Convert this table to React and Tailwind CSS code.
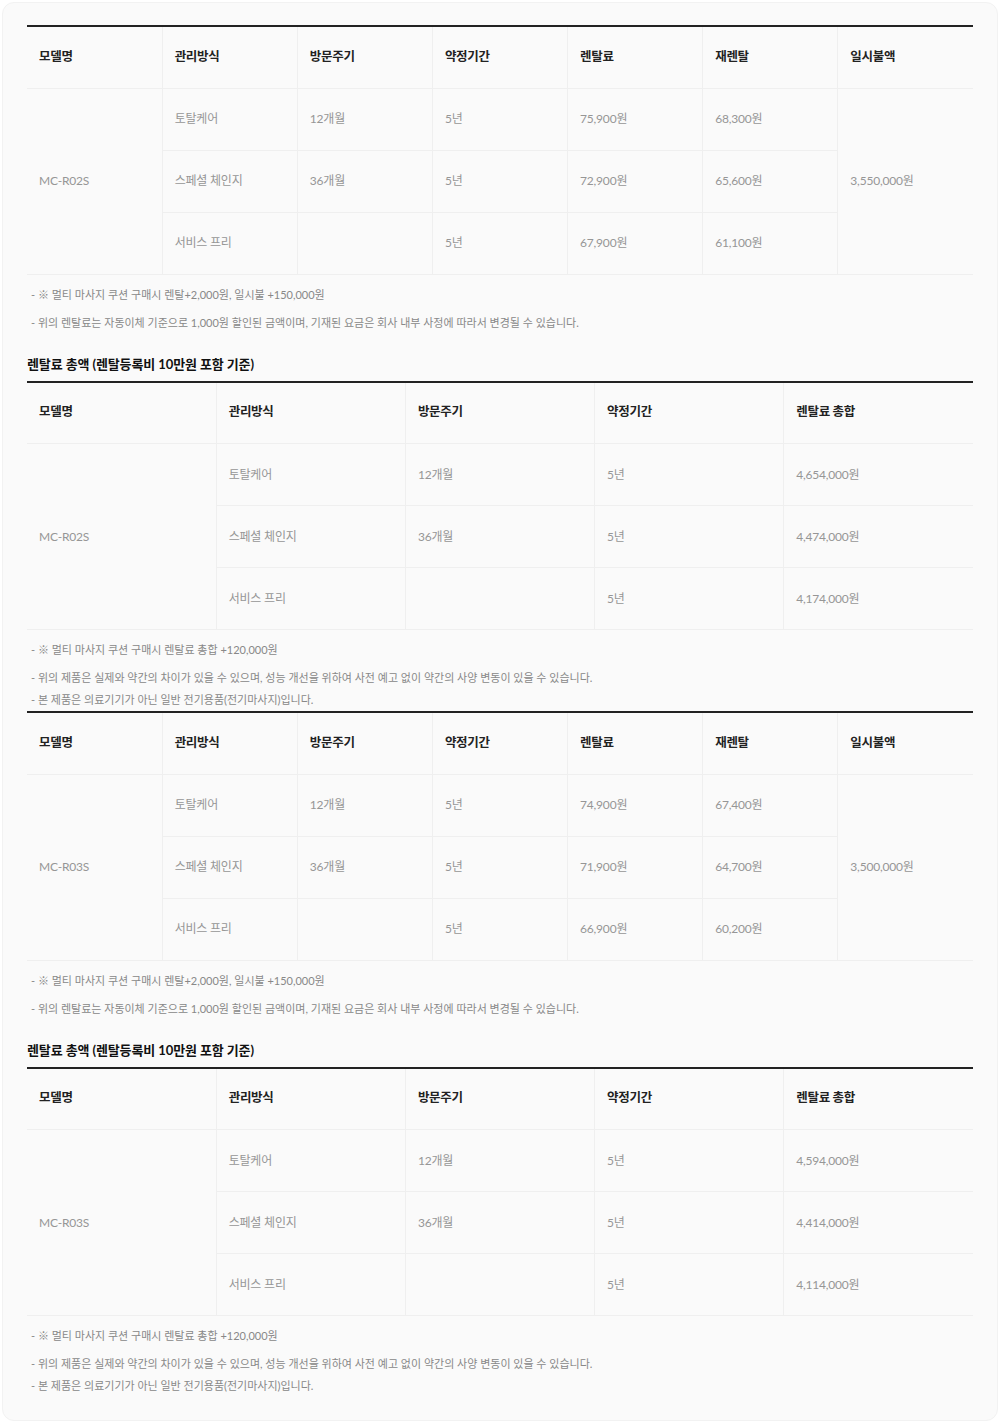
import React from "react";

const font = { fontFamily: 'Lato, "Noto Sans CJK KR", sans-serif' };

const rentalTables = [
  {
    model: "MC-R02S",
    lump: "3,550,000원",
    rows: [
      ["토탈케어", "12개월", "5년", "75,900원", "68,300원"],
      ["스페셜 체인지", "36개월", "5년", "72,900원", "65,600원"],
      ["서비스 프리", "", "5년", "67,900원", "61,100원"],
    ],
    totals: [
      ["토탈케어", "12개월", "5년", "4,654,000원"],
      ["스페셜 체인지", "36개월", "5년", "4,474,000원"],
      ["서비스 프리", "", "5년", "4,174,000원"],
    ],
  },
  {
    model: "MC-R03S",
    lump: "3,500,000원",
    rows: [
      ["토탈케어", "12개월", "5년", "74,900원", "67,400원"],
      ["스페셜 체인지", "36개월", "5년", "71,900원", "64,700원"],
      ["서비스 프리", "", "5년", "66,900원", "60,200원"],
    ],
    totals: [
      ["토탈케어", "12개월", "5년", "4,594,000원"],
      ["스페셜 체인지", "36개월", "5년", "4,414,000원"],
      ["서비스 프리", "", "5년", "4,114,000원"],
    ],
  },
];

const th =
  "h-[62px] px-3 text-left align-middle text-[12.5px] font-bold tracking-[-0.3px] text-[#222] border-b border-[#efefef]";
const td =
  "h-[62px] px-3 text-left align-middle text-[12px] tracking-[-0.2px] text-[#969696] border-b border-[#efefef]";
const vline = "border-l border-[#efefef]";

const Note = ({ children, className = "" }) => (
  <p
    className={
      "pl-[4px] text-[11px] leading-[20px] tracking-[0px] text-[#888] " + className
    }
  >
    - {children}
  </p>
);

const RentalTable = ({ data }) => (
  <table className="w-full table-fixed border-collapse border-t-2 border-[#222]">
    <thead>
      <tr>
        {["모델명", "관리방식", "방문주기", "약정기간", "렌탈료", "재렌탈", "일시불액"].map(
          (h, i) => (
            <th key={h} className={th + (i > 0 ? " " + vline : "")}>
              {h}
            </th>
          )
        )}
      </tr>
    </thead>
    <tbody>
      {data.rows.map((r, idx) => (
        <tr key={idx}>
          {idx === 0 && (
            <td rowSpan={3} className={td}>
              {data.model}
            </td>
          )}
          {r.map((c, i) => (
            <td key={i} className={td + " " + vline}>
              {c}
            </td>
          ))}
          {idx === 0 && (
            <td rowSpan={3} className={td + " " + vline}>
              {data.lump}
            </td>
          )}
        </tr>
      ))}
    </tbody>
  </table>
);

const TotalTable = ({ data }) => (
  <table className="w-full table-fixed border-collapse border-t-2 border-[#222]">
    <thead>
      <tr>
        {["모델명", "관리방식", "방문주기", "약정기간", "렌탈료 총합"].map((h, i) => (
          <th key={h} className={th + (i > 0 ? " " + vline : "")}>
            {h}
          </th>
        ))}
      </tr>
    </thead>
    <tbody>
      {data.totals.map((r, idx) => (
        <tr key={idx}>
          {idx === 0 && (
            <td rowSpan={3} className={td}>
              {data.model}
            </td>
          )}
          {r.map((c, i) => (
            <td key={i} className={td + " " + vline}>
              {c}
            </td>
          ))}
        </tr>
      ))}
    </tbody>
  </table>
);

export default function App() {
  return (
    <div className="bg-white p-[2px]" style={font}>
      <div className="rounded-xl border border-[#f2f2f2] bg-[#fafafa] px-6 pt-[22px] pb-6">
        {rentalTables.map((d, i) => (
          <section key={d.model}>
            <RentalTable data={d} />
            <Note className="mt-[10px]">
              ※ 멀티 마사지 쿠션 구매시 렌탈+2,000원, 일시불 +150,000원
            </Note>
            <Note className="mt-2">
              위의 렌탈료는 자동이체 기준으로 1,000원 할인된 금액이며, 기재된 요금은 회사 내부
              사정에 따라서 변경될 수 있습니다.
            </Note>
            <h3 className="mt-[20px] text-[13px] font-bold leading-[22px] tracking-[-0.1px] text-[#111]">
              렌탈료 총액 (렌탈등록비 10만원 포함 기준)
            </h3>
            <div className="mt-[6px]">
              <TotalTable data={d} />
            </div>
            <Note className="mt-[10px]">※ 멀티 마사지 쿠션 구매시 렌탈료 총합 +120,000원</Note>
            <Note className="mt-2">
              위의 제품은 실제와 약간의 차이가 있을 수 있으며, 성능 개선을 위하여 사전 예고 없이
              약간의 사양 변동이 있을 수 있습니다.
            </Note>
            <Note className={i === 0 ? "mt-[2px] mb-[1px]" : "mt-[2px]"}>
              본 제품은 의료기기가 아닌 일반 전기용품(전기마사지)입니다.
            </Note>
          </section>
        ))}
      </div>
    </div>
  );
}
